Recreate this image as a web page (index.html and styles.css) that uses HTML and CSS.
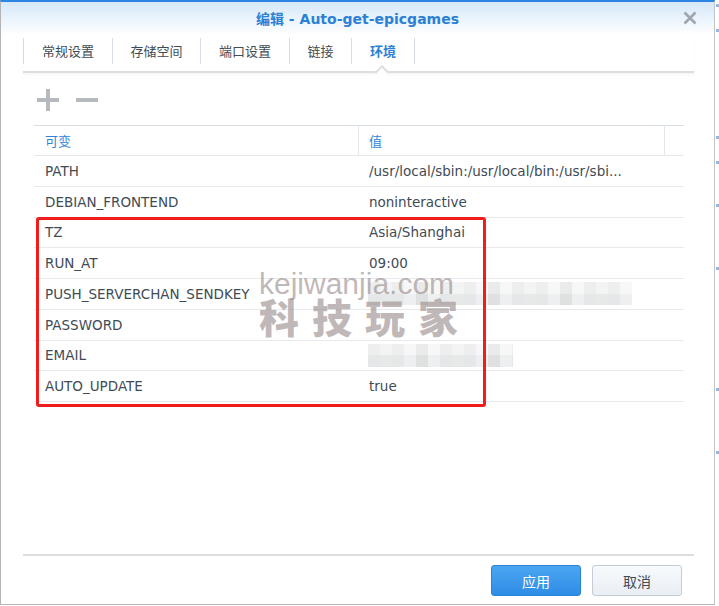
FILE: index.html
```html
<!DOCTYPE html>
<html>
<head>
<meta charset="utf-8">
<title>编辑 - Auto-get-epicgames</title>
<link rel="stylesheet" href="styles.css">
</head>
<body>
<div class="desk">
  <div class="dialog">
    <div class="title-bar">
      <span></span>
      <h1 class="title">编辑 - Auto-get-epicgames</h1>
      <button type="button" class="close" aria-label="Close">
        <svg width="14" height="14" viewBox="0 0 14 14"><path d="M1.5 1.5 L12.5 12.5 M12.5 1.5 L1.5 12.5" stroke="#9fa5ac" stroke-width="2.6" fill="none"/></svg>
      </button>
    </div>

    <ul class="tabs">
      <li>常规设置</li>
      <li>存储空间</li>
      <li>端口设置</li>
      <li>链接</li>
      <li class="active">环境</li>
    </ul>

    <div class="panel">
      <div class="toolbar">
        <span class="tool"><svg width="22" height="22" viewBox="0 0 22 22"><rect x="0" y="9" width="22" height="4" fill="#b6b9bd"/><rect x="9" y="0" width="4" height="22" fill="#b6b9bd"/></svg></span>
        <span class="tool"><svg width="22" height="22" viewBox="0 0 22 22"><rect x="0" y="9" width="22" height="4" fill="#b6b9bd"/></svg></span>
      </div>

      <table class="env-grid">
        <colgroup><col class="c-name"><col class="c-value"><col></colgroup>
        <thead>
          <tr><th>可变</th><th>值</th><th></th></tr>
        </thead>
        <tbody>
          <tr><td>PATH</td><td>/usr/local/sbin:/usr/local/bin:/usr/sbi...</td><td></td></tr>
          <tr><td>DEBIAN_FRONTEND</td><td>noninteractive</td><td></td></tr>
          <tr><td>TZ</td><td>Asia/Shanghai</td><td></td></tr>
          <tr><td>RUN_AT</td><td>09:00</td><td></td></tr>
          <tr><td>PUSH_SERVERCHAN_SENDKEY</td><td><span class="mosaic mosaic-key"></span></td><td></td></tr>
          <tr><td>PASSWORD</td><td></td><td></td></tr>
          <tr><td>EMAIL</td><td><span class="mosaic mosaic-mail"></span></td><td></td></tr>
          <tr><td>AUTO_UPDATE</td><td>true</td><td></td></tr>
        </tbody>
      </table>
    </div>

    <div class="footer">
      <button type="button" class="btn btn-primary">应用</button>
      <button type="button" class="btn">取消</button>
    </div>

    <div class="mark-box"></div>
    <div class="watermark">
      <div class="wm-url">kejiwanjia.com</div>
      <div class="wm-cn">科技玩家</div>
    </div>
  </div>
  <div class="desk-edge">
    <i style="margin-top:4px"></i>
    <i style="margin-top:22px"></i>
    <i style="margin-top:104px"></i>
    <i style="margin-top:22px"></i>
    <i style="margin-top:40px"></i>
    <i style="margin-top:60px"></i>
    <i style="margin-top:118px"></i>
    <i style="margin-top:60px"></i>
  </div>
</div>
</body>
</html>
```

FILE: styles.css
```css
body { margin: 0; background: #ffffff; font-family: "DejaVu Sans", "Noto Sans CJK SC", sans-serif; font-size: 13px; color: #414b55; }

.desk { display: flex; height: 606px; }

.dialog { position: relative; display: flex; flex-direction: column; box-sizing: border-box; width: 715px; height: 605px; background: #ffffff; border-top: 2px solid #2a86e2; border-left: 1px solid #b4b4b4; border-right: 1px solid #c4c4c4; border-bottom: 1px solid #b8b8b8; }

/* title */
.title-bar { display: grid; grid-template-columns: 1fr auto 1fr; align-items: center; box-sizing: border-box; height: 35px; padding-bottom: 3px; background: linear-gradient(#d5e8f9, #ffffff 95%); }
.title { margin: 0; font-size: 14px; font-weight: bold; color: #2b80d6; }
.close { justify-self: end; margin-right: 17px; padding: 0; border: 0; background: none; width: 14px; height: 14px; display: flex; }

/* tabs */
.tabs { display: flex; margin: 0 20px 0 22px; padding: 0 0 7px; list-style: none; border-bottom: 2px solid #dcdfe2; box-shadow: 0 2px 2px rgba(0, 0, 0, 0.04); }
.tabs li { position: relative; height: 26px; line-height: 26px; margin-top: 1px; padding: 0 17.5px 0 18px; border-right: 1px solid #d5dce3; font-family: "Noto Sans CJK SC", sans-serif; font-size: 13px; color: #414b55; }
.tabs li:first-child { border-left: 1px solid #d5dce3; }
.tabs li.active { color: #2b80d6; font-weight: bold; }
.tabs li.active::after { content: ""; position: absolute; left: 50%; bottom: -13px; width: 10px; height: 10px; margin-left: -6px; background: #ffffff; border-top: 2px solid #dcdfe2; border-left: 2px solid #dcdfe2; box-sizing: border-box; transform: rotate(45deg); }

/* grid */
.panel { padding: 0 30px 0 33px; }
.toolbar { display: flex; gap: 17px; height: 22px; margin-top: 16px; padding-left: 3px; }
.tool { display: flex; }

.env-grid { width: 100%; margin-top: 14px; table-layout: fixed; border-collapse: separate; border-spacing: 0; }
.env-grid col.c-name { width: 325px; }
.env-grid col.c-value { width: 306px; }
.env-grid th { height: 29px; padding: 0 0 0 10px; border-top: 1px solid #d6dde4; border-bottom: 1px solid #e3e8ed; text-align: left; font-weight: normal; font-family: "Noto Sans CJK SC", sans-serif; color: #2e84da; }
.env-grid th:first-child { padding-left: 11px; }
.env-grid th:nth-child(1), .env-grid th:nth-child(2) { border-right: 1px solid #e3e8ed; }
.env-grid td { height: 29.75px; padding: 0 0 0 10px; border-bottom: 1px solid #e6eaee; font-size: 13.5px; white-space: nowrap; overflow: hidden; }
.env-grid td:first-child { padding-left: 11px; }

.mosaic { display: block; height: 23px; margin-left: -1px; background-color: #eeeff0;
  background-image:
    linear-gradient(90deg, rgba(0,0,0,0.035) 50%, transparent 50%),
    linear-gradient(rgba(255,255,255,0.5) 50%, transparent 50%),
    linear-gradient(90deg, transparent 33%, rgba(0,0,0,0.03) 33%, rgba(0,0,0,0.03) 66%, transparent 66%);
  background-size: 24px 100%, 100% 23px, 36px 100%; }
.mosaic-key { width: 264px; }
.mosaic-mail { width: 145px; }

/* footer */
.footer { display: flex; justify-content: flex-end; gap: 11px; margin: auto 20px 0 22px; padding: 9px 12px 8px; border-top: 2px solid #dcdfe2; }
.btn { box-sizing: border-box; width: 90px; height: 31px; padding: 0; border: 1px solid #c4ccd5; border-radius: 3px; background: linear-gradient(#f8fafc, #e9eef4); font-family: "Noto Sans CJK SC", sans-serif; font-size: 14px; color: #414b55; }
.btn-primary { border-color: #2a84dc; background: linear-gradient(#4ba6f1, #2f8ce6); color: #ffffff; }

/* overlays on the screenshot */
.mark-box { position: absolute; left: 35px; top: 215px; width: 450px; height: 190px; box-sizing: border-box; border: 3px solid #f11c1c; border-radius: 3px; }
.watermark { position: absolute; left: 258px; top: 266px; color: rgba(150, 136, 136, 0.6); font-family: "Liberation Sans", Arial, sans-serif; }
.wm-url { font-size: 30px; line-height: 32px; }
.wm-cn { margin-top: -4px; font-family: "Noto Sans CJK SC", sans-serif; font-size: 40px; font-weight: 900; line-height: 40px; letter-spacing: 13px; }

.desk-edge { display: flex; flex-direction: column; align-items: flex-end; flex: 1; }
.desk-edge i { display: block; width: 3px; height: 3px; background: #5b9be0; opacity: 0.7; }
```
